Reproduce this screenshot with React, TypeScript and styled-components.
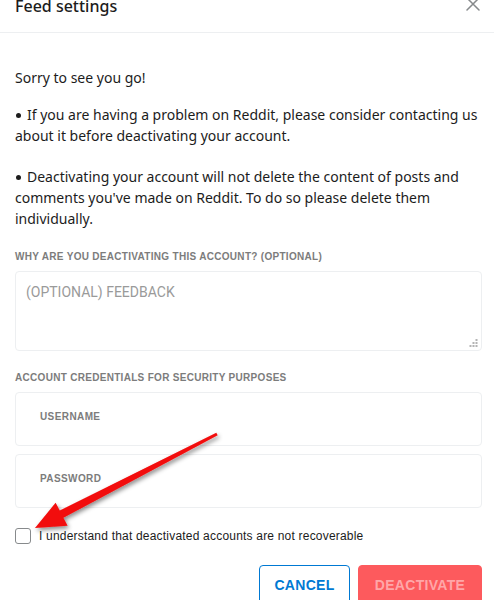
import React from "react";
import styled, { createGlobalStyle } from "styled-components";

const Global = createGlobalStyle`
  html, body { margin: 0; padding: 0; background: #ffffff; }
  body { font-family: "Noto Sans", Arial, sans-serif; color: #1c1c1c; }
  * { box-sizing: border-box; }
`;

const Page = styled.div`
  position: relative;
  width: 494px;
  height: 600px;
  overflow: hidden;
  background: #fff;
`;

const Header = styled.header`
  display: flex;
  justify-content: space-between;
  align-items: flex-start;
  height: 33px;
  padding: 0 13px 0 15px;
  border-bottom: 1px solid #edeff1;
`;

const Title = styled.h1`
  margin: -2px 0 0;
  font-family: "Noto Sans", Arial, sans-serif;
  font-size: 16px;
  line-height: 16px;
  font-weight: 500;
  color: #1c1c1c;
`;

const CloseButton = styled.button`
  border: none;
  background: none;
  padding: 0;
  margin-top: -4px;
  width: 16px;
  height: 16px;
  display: flex;
  align-items: center;
  justify-content: center;
  color: #878a8c;
  cursor: pointer;
`;

const Body = styled.div`
  padding: 34px 12px 0 15px;
  display: flex;
  flex-direction: column;
`;

const Text = styled.p<{ $gap?: number }>`
  margin: 0 0 ${(p) => p.$gap ?? 0}px;
  font-size: 14px;
  line-height: 21px;
  font-weight: 400;
  color: #1c1c1c;
`;

const Bullet = styled.span`
  display: inline-block;
  width: 5px;
  height: 5px;
  border-radius: 50%;
  background: #1c1c1c;
  vertical-align: middle;
  margin: -2px 6px 0 1px;
`;

const Label = styled.div<{ $top: number }>`
  margin: ${(p) => p.$top}px 0 8px;
  font-family: "Liberation Sans", Arial, sans-serif;
  font-size: 10px;
  line-height: 12px;
  font-weight: 700;
  letter-spacing: 0.3px;
  color: #7c7c7c;
  text-transform: uppercase;
`;

const TextAreaWrap = styled.div`
  position: relative;
  width: 467px;
  height: 80px;
`;

const Feedback = styled.textarea`
  width: 100%;
  height: 100%;
  resize: none;
  border: 1px solid #edeff1;
  border-radius: 4px;
  padding: 12px 10px;
  font-family: Roboto, Arial, sans-serif;
  font-size: 14px;
  line-height: 17px;
  outline: none;
  color: #1c1c1c;
  &::placeholder { color: #9a9a9a; }
`;

const Grip = styled.svg`
  position: absolute;
  right: 4px;
  bottom: 3px;
  pointer-events: none;
`;

const Fields = styled.div`
  display: flex;
  flex-direction: column;
  gap: 8px;
`;

const Field = styled.div`
  width: 467px;
  height: 54px;
  border: 1px solid #edeff1;
  border-radius: 4px;
  display: flex;
  align-items: center;
  padding: 0 24px 5px;
  font-family: "Liberation Sans", Arial, sans-serif;
  font-size: 10px;
  font-weight: 700;
  letter-spacing: 0.4px;
  color: #7c7c7c;
`;

const CheckRow = styled.label`
  display: flex;
  align-items: center;
  gap: 8px;
  margin-top: 20px;
  font-family: "Liberation Sans", Arial, sans-serif;
  font-size: 12px;
  line-height: 16px;
  font-weight: 400;
  letter-spacing: 0.2px;
  color: #1c1c1c;
`;

const Box = styled.span`
  width: 16px;
  height: 16px;
  border: 1px solid #878a8c;
  border-radius: 3px;
  flex: none;
`;

const Actions = styled.div`
  display: flex;
  justify-content: flex-end;
  gap: 8px;
  margin-top: 21px;
`;

const Btn = styled.button<{ $primary?: boolean }>`
  height: 40px;
  border-radius: 4px;
  padding: 0;
  font-family: "Liberation Sans", Arial, sans-serif;
  font-size: 14px;
  font-weight: 700;
  letter-spacing: 0.3px;
  border: 1px solid ${(p) => (p.$primary ? "#fd5a5d" : "#0079d3")};
  background: ${(p) => (p.$primary ? "#fd5a5d" : "#fff")};
  color: ${(p) => (p.$primary ? "#ffa6a8" : "#0079d3")};
  width: ${(p) => (p.$primary ? 124 : 91)}px;
`;

const Overlay = styled.svg`
  position: absolute;
  left: 0;
  top: 0;
  pointer-events: none;
`;

export default function App() {
  return (
    <Page>
      <Global />
      <Header>
        <Title>Feed settings</Title>
        <CloseButton aria-label="close">
          <svg width="14" height="14" viewBox="0 0 14 14">
            <path d="M1 1 L13 13 M13 1 L1 13" stroke="#878a8c" strokeWidth="1.5" strokeLinecap="round" />
          </svg>
        </CloseButton>
      </Header>
      <Body>
        <Text $gap={16}>Sorry to see you go!</Text>
        <Text $gap={20}>
          <Bullet />If you are having a problem on Reddit, please consider contacting us about it before deactivating your account.
        </Text>
        <Text>
          <Bullet />Deactivating your account will not delete the content of posts and comments you've made on Reddit. To do so please delete them individually.
        </Text>
        <Label $top={22}>Why are you deactivating this account? (optional)</Label>
        <TextAreaWrap>
          <Feedback placeholder="(OPTIONAL) FEEDBACK" />
          <Grip width="9" height="9" viewBox="0 0 9 9">
            <g fill="#b4b4b4">
              <rect x="6.5" y="0" width="2" height="2" />
              <rect x="3.5" y="3" width="2" height="2" />
              <rect x="6.5" y="3" width="2" height="2" />
              <rect x="0.5" y="6" width="2" height="2" />
              <rect x="3.5" y="6" width="2" height="2" />
              <rect x="6.5" y="6" width="2" height="2" />
            </g>
          </Grip>
        </TextAreaWrap>
        <Label $top={21}>Account credentials for security purposes</Label>
        <Fields>
          <Field>USERNAME</Field>
          <Field>PASSWORD</Field>
        </Fields>
        <CheckRow>
          <Box />
          I understand that deactivated accounts are not recoverable
        </CheckRow>
        <Actions>
          <Btn>CANCEL</Btn>
          <Btn $primary>DEACTIVATE</Btn>
        </Actions>
      </Body>
      <Overlay width="494" height="600" viewBox="0 0 494 600">
        <defs>
          <filter id="sh" x="-20%" y="-20%" width="140%" height="140%">
            <feDropShadow dx="1.5" dy="2.5" stdDeviation="2" floodColor="#000" floodOpacity="0.45" />
          </filter>
        </defs>
        <polygon
          points="35,528 67.6,525.7 63.4,517.8 217.7,435.3 216.3,432.7 59.8,510.6 55.6,502.7"
          fill="#f20a0a"
          filter="url(#sh)"
        />
      </Overlay>
    </Page>
  );
}
